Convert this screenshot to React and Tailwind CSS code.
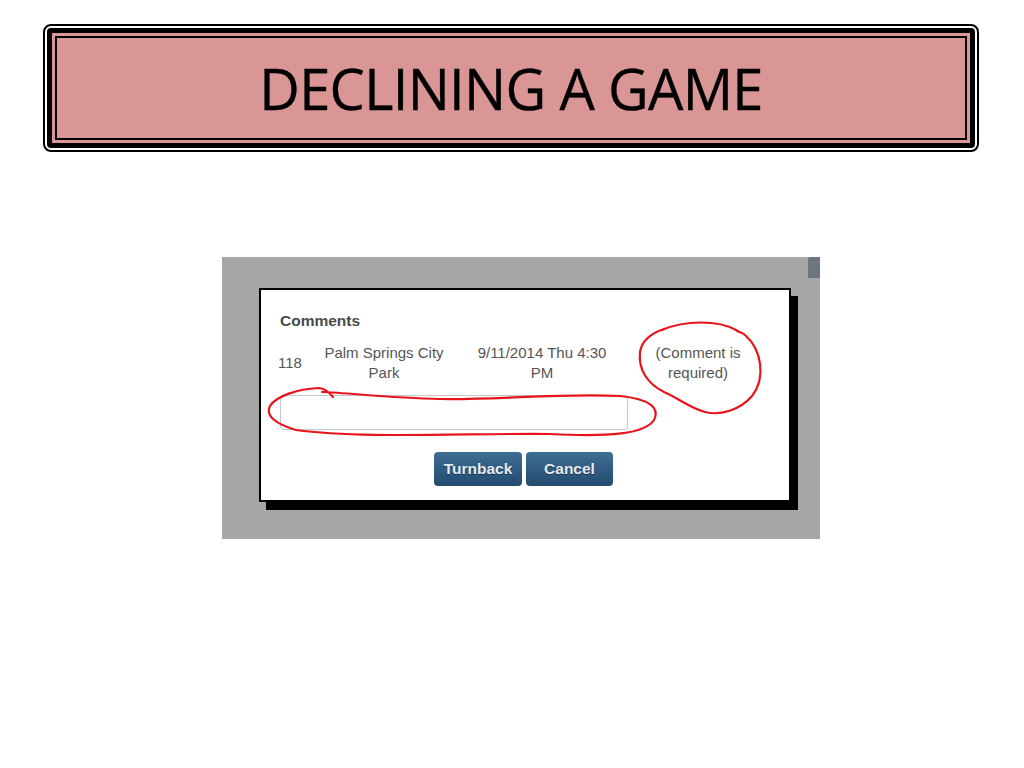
export default function App() {
  return (
    <div className="relative w-[1024px] h-[768px] bg-white overflow-hidden">
      {/* slide title */}
      <div className="ml-[43px] mt-[24px] w-[936px] h-[128px] border-2 border-black rounded-[8px] p-[2px] bg-white">
        <div className="h-full border-[5px] border-black rounded-[4px] bg-[#d99694] p-[3px]">
          <div className="h-full border-2 border-black bg-[#d99694] flex items-center justify-center">
            <h1 className="text-[56px] leading-none text-black tracking-[-0.7px] [-webkit-text-stroke:0.4px_#000]" style={{ fontFamily: '"Open Sans", sans-serif' }}>
              DECLINING A GAME
            </h1>
          </div>
        </div>
      </div>

      {/* screenshot */}
      <div className="relative ml-[222px] mt-[105px] w-[598px] h-[282px] bg-[#a6a6a6] pt-[31px] pl-[37px]" style={{ fontFamily: '"Liberation Sans", Arial, sans-serif' }}>
        <div className="absolute right-0 top-0 w-[12px] h-[21px] bg-[#6c7580] rounded-tl-[3px]" />
        <div className="w-[532px] h-[214px] bg-white border-2 border-black shadow-[7px_8px_0_0_#000] pt-[21px]">
          <div className="pl-[19px] text-[15.5px] leading-[20px] font-bold text-[#4a4a4a]">Comments</div>
          <div className="mt-[12px] pl-[17px] flex items-center text-[15px] leading-[20px] text-[#555]">
            <div className="w-[36px]">118</div>
            <div className="w-[140px] text-center">Palm Springs City<br />Park</div>
            <div className="ml-[18px] w-[140px] text-center">9/11/2014 Thu 4:30<br />PM</div>
            <div className="ml-[31px] w-[110px] text-center">(Comment is<br />required)</div>
          </div>
          <div className="mt-[12px] ml-[19px] w-[348px] h-[35px] border border-[#c8c8c8] rounded-[3px]" />
          <div className="mt-[22px] flex justify-center gap-[4px] pr-[3px]">
            <button className="w-[88px] h-[34px] rounded-[4px] bg-gradient-to-b from-[#3f6d94] to-[#234b70] text-[15.5px] font-bold text-[#e3eaf1] [text-shadow:0_1px_1px_rgba(0,0,0,0.4)]">
              Turnback
            </button>
            <button className="w-[87px] h-[34px] rounded-[4px] bg-gradient-to-b from-[#3f6d94] to-[#234b70] text-[15.5px] font-bold text-[#e3eaf1] [text-shadow:0_1px_1px_rgba(0,0,0,0.4)]">
              Cancel
            </button>
          </div>
        </div>
      </div>

      {/* red annotations */}
      <svg className="absolute left-0 top-0 pointer-events-none" width="1024" height="768" viewBox="0 0 1024 768" fill="none">
        <path
          d="M662 330 C685 320 718 320 736 330 C740 333 742 332 745 335 C762 350 766 378 752 396 C740 410 720 416 705 412 C690 408 678 398 664 392 C648 384 638 370 640 352 C642 340 652 333 664 329"
          stroke="#e8141c"
          strokeWidth="2.2"
          strokeLinecap="round"
        />
        <path
          d="M333 397 C328 391 323 388 318 388 C298 389 276 396 270 406 C265 416 276 424 296 430 C360 439 470 433 550 434 C610 437 645 434 654 420 C660 408 650 399 620 396 C560 393 500 400 440 399 C390 398 350 393 322 392"
          stroke="#e8141c"
          strokeWidth="2.2"
          strokeLinecap="round"
        />
      </svg>
    </div>
  )
}
